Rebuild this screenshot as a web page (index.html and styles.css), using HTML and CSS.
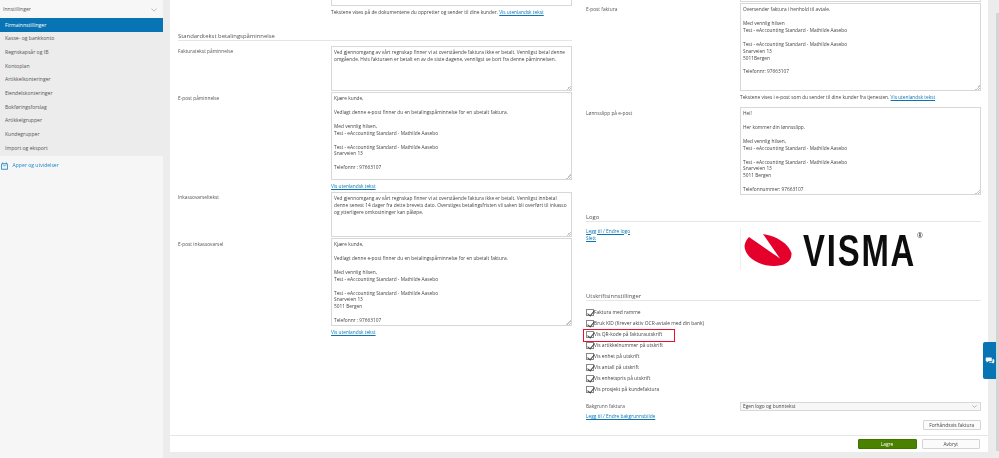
FILE: index.html
```html
<!DOCTYPE html>
<html lang="no">
<head>
<meta charset="utf-8">
<title>Firmainnstillinger</title>
<link rel="stylesheet" href="styles.css">
</head>
<body>
<aside class="sidebar">
  <div class="picker"><span>Innstillinger</span>
    <svg class="chev" viewBox="0 0 8 5" width="6" height="4"><path d="M.5.5 4 4 7.500.5" fill="none" stroke="#999" stroke-width=".8"/></svg>
  </div>
  <nav class="menu">
    <a class="item active">Firmainnstillinger</a>
    <a class="item">Kasse- og bankkonto</a>
    <a class="item">Regnskapsår og IB</a>
    <a class="item">Kontoplan</a>
    <a class="item">Artikkelkonteringer</a>
    <a class="item">Eiendelskonteringer</a>
    <a class="item">Bokføringsforslag</a>
    <a class="item">Artikkelgrupper</a>
    <a class="item">Kundegrupper</a>
    <a class="item">Import og eksport</a>
  </nav>
  <a class="apps">
    <svg viewBox="0 0 8 10" width="7" height="9"><path d="M2 3V1.500M6 3V1.500M.8 3h6.400l.4 6.300H.4zM2.800 4.800c.4.800 2 .8 2.400 0" fill="none" stroke="#0b78bb" stroke-width=".9"/></svg>
    <span>Apper og utvidelser</span>
  </a>
</aside>

<main class="panel">
  <div class="columns">
    <section class="col">
      <div class="row">
        <div class="label"></div>
        <div class="field"><div class="stub stub-left"></div>
          <p class="hint">Tekstene vises på de dokumentene du oppretter og sender til dine kunder. <a class="link">Vis utenlandsk tekst</a></p>
        </div>
      </div>

      <h2 class="heading heading-reminder">Standardtekst betalingspåminnelse</h2>

      <div class="row">
        <div class="label">Fakturatekst påminnelse</div>
        <div class="field"><textarea class="ta h45" readonly>Ved gjennomgang av vårt regnskap finner vi at overstående faktura ikke er betalt. Vennligst betal denne omgående. Hvis fakturaen er betalt en av de siste dagene, vennligst se bort fra denne påminnelsen.</textarea></div>
      </div>
      <div class="row">
        <div class="label">E-post påminnelse</div>
        <div class="field"><textarea class="ta h88" readonly>Kjære kunde,

Vedlagt denne e-post finner du en betalingspåminnelse for en ubetalt faktura.

Med vennlig hilsen,
Test - eAccounting Standard - Mathilde Aasebo

Test - eAccounting Standard - Mathilde Aasebo
Snarveien 13

Telefonnr : 97663107</textarea>
          <a class="link block">Vis utenlandsk tekst</a></div>
      </div>
      <div class="row">
        <div class="label">Inkassovarseltekst</div>
        <div class="field"><textarea class="ta h45" readonly>Ved gjennomgang av vårt regnskap finner vi at overstående faktura ikke er betalt. Vennligst innbetal denne senest 14 dager fra dette brevets dato. Overstiges betalingsfristen vil saken bli overført til inkasso og ytterligere omkostninger kan påløpe.</textarea></div>
      </div>
      <div class="row">
        <div class="label">E-post inkassovarsel</div>
        <div class="field"><textarea class="ta h88" readonly>Kjære kunde,

Vedlagt denne e-post finner du en betalingspåminnelse for en ubetalt faktura.

Med vennlig hilsen,
Test - eAccounting Standard - Mathilde Aasebo

Test - eAccounting Standard - Mathilde Aasebo
Snarveien 13
5011 Bergen

Telefonnr : 97663107</textarea>
          <a class="link block">Vis utenlandsk tekst</a></div>
      </div>
    </section>

    <section class="col">
      <div class="stub stub-right"></div>
      <div class="row">
        <div class="label">E-post faktura</div>
        <div class="field"><textarea class="ta h88" readonly>Oversender faktura i henhold til avtale.

Med vennlig hilsen
Test - eAccounting Standard - Mathilde Aasebo

Test - eAccounting Standard - Mathilde Aasebo
Snarveien 13
5011Bergen

Telefonnr: 97663107</textarea>
          <p class="hint hint-gap">Tekstene vises i e-post som du sender til dine kunder fra tjenesten. <a class="link">Vis utenlandsk tekst</a></p></div>
      </div>
      <div class="row">
        <div class="label">Lønnsslipp på e-post</div>
        <div class="field"><textarea class="ta h88" readonly>Hei!

Her kommer din lønnsslipp.

Med vennlig hilsen,
Test - eAccounting Standard - Mathilde Aasebo

Test - eAccounting Standard - Mathilde Aasebo
Snarveien 13
5011 Bergen

Telefonnummer: 97663107</textarea></div>
      </div>

      <h2 class="heading heading-logo">Logo</h2>
      <div class="row logo-row">
        <div class="label links"><a class="link">Legg til / Endre logo</a><a class="link">Slett</a></div>
        <div class="field logo">
          <svg class="swoosh" viewBox="0 0 48 32" width="48" height="32"><path d="M.5 12C1 8 3 5 5 3L36 24.500 19 0C32 2 44 9 47.500 19 48 28 40 32 30 32 16 32 1 24 .5 12Z" fill="#e4002b"/></svg>
          <span class="wordmark">VISMA</span><span class="reg">®</span>
        </div>
      </div>

      <h2 class="heading heading-print">Utskriftsinnstillinger</h2>
      <div class="checks">
        <label class="check"><span class="box"></span>Faktura med ramme</label>
        <label class="check"><span class="box"></span>Bruk KID (Krever aktiv OCR-avtale med din bank)</label>
        <label class="check highlight"><span class="box"></span>Vis QR-kode på fakturautskrift</label>
        <label class="check"><span class="box"></span>Vis artikkelnummer på utskrift</label>
        <label class="check"><span class="box"></span>Vis enhet på utskrift</label>
        <label class="check"><span class="box"></span>Vis antall på utskrift</label>
        <label class="check"><span class="box"></span>Vis enhetspris på utskrift</label>
        <label class="check"><span class="box"></span>Vis prosjekt på kundefaktura</label>
      </div>

      <div class="row bg-row">
        <div class="label">Bakgrunn faktura</div>
        <div class="field"><div class="select"><span>Egen logo og bunntekst</span>
          <svg viewBox="0 0 8 5" width="5" height="3"><path d="M.5.5 4 4 7.500.5" fill="none" stroke="#888" stroke-width="1"/></svg></div></div>
      </div>
      <a class="link block bg-link">Legg til / Endre bakgrunnsbilde</a>
      <div class="preview-row"><button class="btn">Forhåndsvis faktura</button></div>
    </section>
  </div>
  <footer class="actions">
    <button class="btn primary">Lagre</button>
    <button class="btn">Avbryt</button>
  </footer>
</main>

<div class="scrollbar"><div class="thumb"></div></div>

<div class="chat">
  <svg viewBox="0 0 14 11" width="10" height="8"><path d="M1 1.500C1 .8 1.500.5 2 .5h6.500c.6 0 1 .4 1 1v3.500c0 .6-.4 1-1 1H4.500L2.500 7.800V6H2c-.6 0-1-.4-1-1z" fill="#fff"/><path d="M10.500 3H12c.6 0 1 .4 1 1v3c0 .6-.4 1-1 1h-.3v1.500L10 8H6.500c-.5 0-.8-.2-1-.7h3.300c1 0 1.700-.7 1.700-1.700z" fill="#fff"/></svg>
</div>
</body>
</html>
```

FILE: styles.css
```css
* { box-sizing: border-box; }
html, body { height: 100%; }
body {
  margin: 0;
  height: 458px;
  overflow: hidden;
  display: flex;
  background: #ececec;
  font-family: "Open Sans", "Noto Sans", sans-serif;
  font-size: 4.800px;
  line-height: 7px;
  color: #444;
  filter: blur(.3px);
}

.sidebar {
  width: 163px;
  flex: none;
  background: #f6f6f6;
  padding-top: 1px;
  font-size: 5.100px;
}
.picker {
  height: 15px;
  padding: 2px 6px 0 3px;
  display: flex;
  align-items: center;
  justify-content: space-between;
  background: #f7f7f7;
  color: #555;
}
.menu { margin-top: 2px; padding-bottom: 1px; background: #ececec; }
.item {
  display: flex;
  align-items: center;
  height: 13.700px;
  padding-left: 5px;
  color: #555;
}
.item.active { height: 14px; background: #0974b3; color: #fff; }
.apps {
  display: flex;
  align-items: center;
  gap: 4.500px;
  padding: 4.500px 0 0 1px;
  color: #1a86c8;
}

.panel {
  width: 818px;
  margin-left: 7px;
  height: 452px;
  background: #fff;
  flex: none;
  display: flex;
  flex-direction: column;
}
.columns {
  flex: 1;
  min-height: 0;
  display: grid;
  grid-template-columns: 402px 400px;
  padding-left: 8px;
  gap: 6px;
}
.col { min-width: 0; }
.row { display: flex; margin-bottom: 1.500px; }
.label { width: 153px; flex: none; padding-top: 2.500px; color: #555; }
.field { width: 241px; flex: none; }
.col + .col .label { width: 154px; }

.stub { border: 1px solid #d8d8d8; background: #fff; }
.stub-left { height: 6px; border-top: 0; }
.stub-right { height: 2px; border-top: 0; margin: 0 0 1px 154px; width: 241px; }

.ta {
  display: block;
  width: 100%;
  margin: 0;
  padding: 2.200px 2px;
  border: 1px solid #d8d8d8;
  border-radius: 0;
  outline: 0;
  overflow: hidden;
  resize: vertical;
  background: #fff;
  font: inherit;
  line-height: 6.900px;
  color: #444;
}
.ta::-webkit-resizer {
  background: linear-gradient(135deg, transparent 50%, #c4c4c4 50%, #c4c4c4 62%, transparent 62%, transparent 76%, #c4c4c4 76%, #c4c4c4 88%, transparent 88%) right bottom / 5px 5px no-repeat;
}
.h45 { height: 45px; }
.h88 { height: 88px; }

.hint { margin: 3px 0 0; }
.hint-gap { margin-bottom: 4.500px; }
.link { color: #0a74b5; text-decoration: underline; }
.block { display: block; }
.field > .link.block { margin-top: 3px; }

.heading {
  margin: 0;
  border-bottom: 1px solid #e5e5e5;
  font-weight: 400;
  font-size: 5.900px;
  line-height: 8px;
  color: #555;
}
.heading-reminder { margin: 15.500px 0 5px; width: 394px; }
.heading-logo { margin: 17.500px 0 6px; width: 395px; }
.heading-print { margin: 20px 0 6px; width: 395px; }

.links { display: flex; flex-direction: column; padding-top: 0; }
.logo-row { height: 44px; margin-bottom: 0; }
.logo {
  display: flex;
  align-items: flex-start;
  height: 42px;
  padding: 6px 0 0 3px;
  border-left: 1px solid #f0f0f0;
}
.swoosh { flex: none; }
.wordmark {
  flex: none;
  width: 113px;
  margin: -6px 0 0 11px;
  font-family: "Liberation Sans", Arial, sans-serif;
  font-weight: 700;
  font-size: 45px;
  line-height: 45px;
  letter-spacing: 2.500px;
  white-space: nowrap;
  color: #0d0d0d;
  transform: scaleX(.73);
  transform-origin: left;
}
.reg {
  margin: -2px 0 0 1px;
  font-size: 7px;
  line-height: 8px;
  color: #222;
}

.checks { display: flex; flex-direction: column; }
.check {
  position: relative;
  display: flex;
  align-items: center;
  height: 11px;
  font-size: 4.900px;
  color: #444;
}
.box {
  position: relative;
  width: 7.500px;
  height: 7px;
  margin-right: .500px;
  border: 1px solid #888;
  background: #fff;
  flex: none;
}
.box::after {
  content: "";
  position: absolute;
  left: 1.500px;
  top: -1px;
  width: 3px;
  height: 6px;
  border: solid #444;
  border-width: 0 1px 1px 0;
  transform: rotate(40deg);
}
.highlight::before {
  content: "";
  position: absolute;
  left: -3px;
  top: 0;
  width: 90px;
  height: 11px;
  border: 1.500px solid #e8112d;
}

.bg-row { margin: 7px 0 0; }
.bg-row .label { padding-top: 1px; }
.select {
  display: flex;
  align-items: center;
  justify-content: space-between;
  height: 9.500px;
  padding: 0 3px 0 2px;
  border: 1px solid #d8d8d8;
  background: #f7f7f7;
  color: #444;
}
.bg-link { margin-top: 2px; }
.preview-row { display: flex; justify-content: flex-end; width: 395px; margin-top: -.500px; }

.btn {
  width: 58.500px;
  height: 10px;
  padding: 0;
  border: 1px solid #d4d4d4;
  border-radius: 1px;
  background: #fbfbfb;
  font: inherit;
  font-size: 4.900px;
  line-height: 8px;
  color: #444;
}
.btn.primary {
  width: 59px;
  border-color: #3f7400;
  background: #4a8200;
  color: #fff;
}

.actions {
  flex: none;
  height: 17px;
  display: flex;
  justify-content: flex-end;
  align-items: center;
  gap: 5px;
  padding-right: 8px;
  border-top: 1px solid #e6e6e6;
}

.scrollbar { flex: none; width: 11px; height: 458px; padding: 13px 0 7px 8px; background: #ececec; }
.thumb { height: 100%; background: #d4d4d4; }

.chat {
  position: absolute;
  left: 983px;
  top: 342px;
  width: 13px;
  height: 37px;
  display: flex;
  align-items: center;
  justify-content: center;
  border-radius: 2px 0 0 2px;
  background: #0974b3;
}
```
